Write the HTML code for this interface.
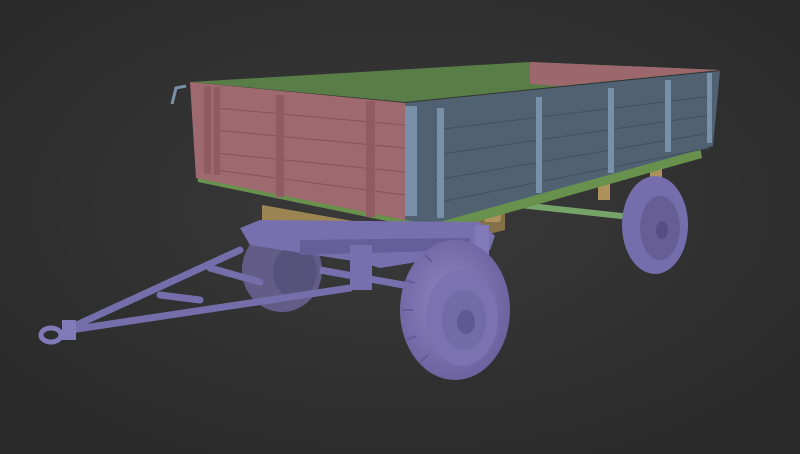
<!DOCTYPE html>
<html><head><style>
html,body{margin:0;padding:0;background:#2f2f2f;}
svg{display:block}
</style></head><body>
<svg width="800" height="454" viewBox="0 0 800 454" xmlns="http://www.w3.org/2000/svg">
<defs>
<radialGradient id="bg" cx="50%" cy="45%" r="65%">
<stop offset="0" stop-color="#3a3a3a"/><stop offset="1" stop-color="#2a2a2a"/>
</radialGradient>
<radialGradient id="wh" cx="45%" cy="45%" r="60%">
<stop offset="0" stop-color="#9186c6"/><stop offset="1" stop-color="#6a609c"/>
</radialGradient>
</defs>
<rect width="800" height="454" fill="url(#bg)"/>

<polygon points="190,82 530,62 720,70 405,102" fill="#587d46"/>
<polygon points="530,62 720,70 560,86 530,84" fill="#9c686d"/>

<polygon points="262,205 375,225 375,262 262,240" fill="#9c8552"/>
<polygon points="375,225 505,200 505,230 375,262" fill="#857148"/>

<line x1="520" y1="205" x2="640" y2="218" stroke="#76a468" stroke-width="6"/>
<rect x="598" y="168" width="12" height="32" fill="#ad925c"/>
<rect x="650" y="158" width="12" height="28" fill="#ad925c"/>
<polygon points="478,205 505,198 500,222 485,222" fill="#ad925c"/>

<ellipse cx="655" cy="225" rx="33" ry="49" fill="#766dac"/>
<ellipse cx="660" cy="228" rx="20" ry="32" fill="#665e94"/>
<ellipse cx="662" cy="230" rx="6" ry="9" fill="#574f84"/>

<ellipse cx="282" cy="270" rx="40" ry="42" fill="#625c86"/>
<ellipse cx="295" cy="272" rx="22" ry="26" fill="#57527a"/>

<polygon points="195,165 432,215 700,145 702,158 440,232 198,182" fill="#67914c"/>

<polygon points="190,82 405,103 405,220 196,178" fill="#9f6a6f"/>
<g stroke="#845458" stroke-width="1">
<line x1="215" y1="108" x2="405" y2="125"/>
<line x1="215" y1="130" x2="405" y2="148"/>
<line x1="215" y1="153" x2="405" y2="172"/>
<line x1="215" y1="170" x2="405" y2="195"/>
</g>
<g fill="#905c62">
<rect x="204" y="86" width="7" height="88"/>
<rect x="214" y="87" width="6" height="88"/>
<rect x="276" y="95" width="8" height="102"/>
<rect x="366" y="101" width="9" height="116"/>
</g>

<polygon points="405,103 720,71 713,146 432,224 405,220" fill="#506172"/>
<g stroke="#425060" stroke-width="1">
<line x1="435" y1="130" x2="712" y2="96"/>
<line x1="435" y1="155" x2="711" y2="115"/>
<line x1="435" y1="180" x2="710" y2="133"/>
<line x1="435" y1="203" x2="709" y2="148"/>
</g>
<g fill="#7891a8">
<rect x="405" y="106" width="12" height="110"/>
<rect x="437" y="108" width="7" height="110"/>
<rect x="536" y="97" width="6" height="96"/>
<rect x="608" y="88" width="6" height="85"/>
<rect x="665" y="80" width="6" height="72"/>
<rect x="707" y="73" width="5" height="70"/>
</g>
<polyline points="172,104 176,88 186,86" stroke="#7891a8" stroke-width="3" fill="none"/>

<g stroke="#766eaa" stroke-width="7" fill="none" stroke-linecap="round">
<line x1="70" y1="328" x2="240" y2="250"/>
<line x1="70" y1="330" x2="350" y2="288"/>
<line x1="160" y1="295" x2="200" y2="300"/>
<line x1="210" y1="268" x2="260" y2="282"/>
</g>
<rect x="62" y="320" width="14" height="20" fill="#8279b8"/>
<ellipse cx="51" cy="335" rx="10" ry="7" fill="none" stroke="#8279b8" stroke-width="5"/>

<polygon points="240,228 260,220 480,222 495,236 490,250 380,268 360,262 250,245" fill="#786fae"/>
<polygon points="300,240 470,238 470,250 300,255" fill="#665e98"/>
<line x1="320" y1="270" x2="420" y2="288" stroke="#786fae" stroke-width="7"/>
<rect x="350" y="245" width="22" height="45" fill="#786fae"/>
<rect x="475" y="225" width="14" height="30" fill="#8279b8"/>

<ellipse cx="455" cy="310" rx="55" ry="70" fill="url(#wh)"/>
<ellipse cx="462" cy="318" rx="36" ry="48" fill="#7c72b2"/>
<ellipse cx="464" cy="320" rx="22" ry="30" fill="#736aa8"/>
<ellipse cx="466" cy="322" rx="9" ry="12" fill="#605894"/>
<g stroke="#645b98" stroke-width="2">
<line x1="405" y1="280" x2="415" y2="283"/>
<line x1="402" y1="310" x2="413" y2="310"/>
<line x1="406" y1="340" x2="416" y2="336"/>
<line x1="420" y1="362" x2="428" y2="355"/>
<line x1="425" y1="255" x2="432" y2="262"/>
</g>
</svg>
</body></html>
